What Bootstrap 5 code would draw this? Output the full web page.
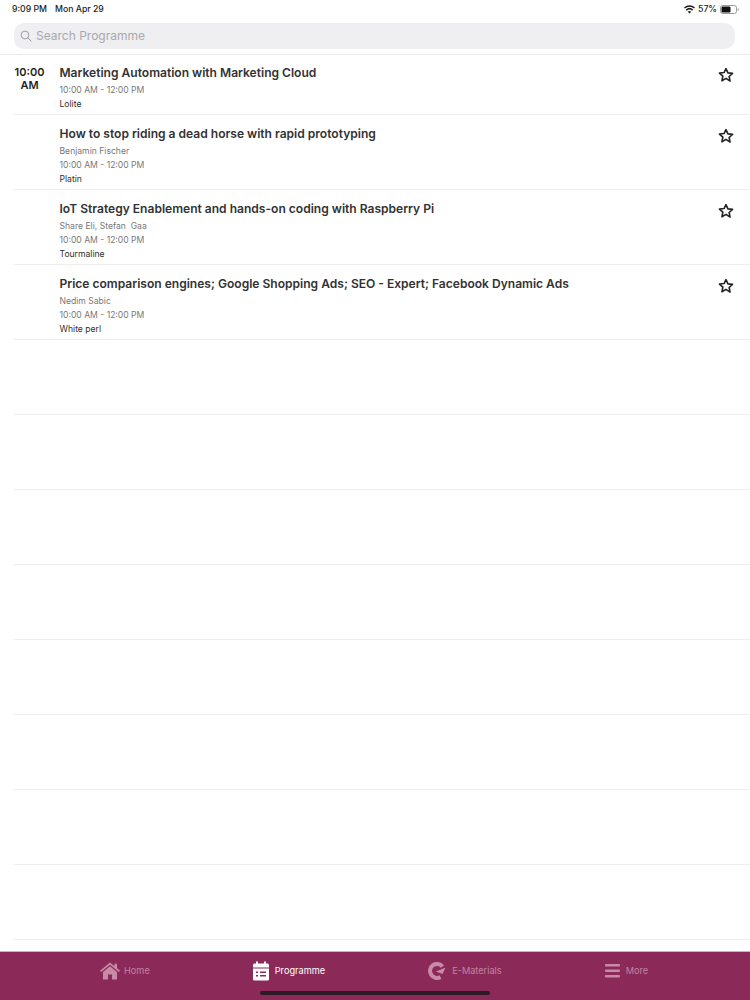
<!DOCTYPE html>
<html lang="en">
<head>
    <meta charset="UTF-8">
    <meta name="viewport" content="width=device-width, initial-scale=1.0">
    <title>Programme</title>
    <link href="https://cdn.jsdelivr.net/npm/bootstrap@5.3.0/dist/css/bootstrap.min.css" rel="stylesheet">
    <style>
        html, body { height: 100%; }
        body {
            font-family: Inter, "Noto Sans", sans-serif;
            background-color: #fff;
            color: #2b2b2d;
        }
        .app-shell { height: 1000px; overflow: hidden; }
        .status-bar {
            height: 23px;
            padding: 3px 11px 0 12px;
            font-size: 8.7px;
            font-weight: 500;
            color: #1c1c1e;
        }
        .status-icons { gap: 3px; }
        .search-wrap { padding: 0 15px 5px 14px; height: 32px; border-bottom: 1px solid #ebebec; }
        .search-box {
            height: 26px;
            background-color: #efeef1;
            border-radius: 10px;
            padding-left: 6px;
            gap: 4px;
            font-size: 12px;
            color: #a9a9ad;
        }
        .session-list { flex: 1 1 auto; overflow: hidden; }
        .session-row { height: 75px; margin-left: 13px; border-bottom: 1px solid #eeeeef; }
        .session-row.first-row { height: 60px; }
        .time-col {
            width: 33px;
            padding-top: 11px;
            font-size: 11px;
            line-height: 13px;
            font-weight: 600;
            text-align: center;
            color: #1f1f21;
        }
        .info-col { padding-left: 13.500px; padding-top: 11px; }
        .first-row .info-col { padding-top: 10px; }
        .session-title { font-size: 12.050px; line-height: 16px; font-weight: 600; color: #323234; margin-bottom: 2px; }
        .session-meta { font-size: 8.6px; line-height: 14px; color: #77777a; }
        .session-room { font-size: 8.6px; line-height: 14px; color: #2e2e30; }
        .star-col { width: 36px; padding-top: 13px; padding-left: 4px; }
        .first-row .star-col { padding-top: 12px; }
        .star-col svg { display: block; }
        .tab-bar {
            height: 49px;
            position: relative;
            padding-left: 100px;
            gap: 103px;
            background-color: #8b2a58;
            border-top: 1px solid #c9b3bd;
        }
        .tab-item { gap: 6px; font-size: 9.200px; color: #c283a3; padding-bottom: 10px; }
        .tab-item.tab-home { gap: 4px; }
        .tab-item.tab-active { color: #fff; }
        .home-bar {
            position: absolute;
            left: 260px;
            bottom: 5px;
            width: 230px;
            height: 4px;
            border-radius: 2px;
            background-color: #2c1a26;
        }
    </style>
</head>
<body>
    <div class="app-shell d-flex flex-column">
        <div class="status-bar d-flex justify-content-between align-items-start">
            <div class="d-flex gap-2"><span>9:09 PM</span><span>Mon Apr 29</span></div>
            <div class="status-icons d-flex align-items-center">
                <svg width="11" height="9" viewBox="0 0 11 9"><path d="M5.500 8.600 3.800 6.700a2.500 2.500 0 0 1 3.400 0zM2.900 5.700 1.800 4.500a5.600 5.600 0 0 1 7.400 0L8.100 5.700a4 4 0 0 0-5.200 0zM.9 3.500 0 2.400a8.300 8.300 0 0 1 11 0l-.9 1.100a7 7 0 0 0-9.200 0z" fill="#1c1c1e"/></svg>
                <span>57%</span>
                <svg width="19" height="9" viewBox="0 0 19 9"><rect x=".5" y=".5" width="16" height="8" rx="2.2" fill="none" stroke="#9a9a9c"/><rect x="1.500" y="1.500" width="9" height="6" rx="1.2" fill="#111"/><path d="M17.800 3v3c.7-.2 1-.8 1-1.500s-.3-1.300-1-1.500z" fill="#9a9a9c"/></svg>
            </div>
        </div>

        <div class="search-wrap flex-shrink-0">
            <div class="search-box d-flex align-items-center">
                <svg width="12" height="12" viewBox="0 0 12 12" fill="none" stroke="#a0a0a4" stroke-width="1"><circle cx="5" cy="5" r="3.900"/><path d="m8 8 3.300 3.300" stroke-linecap="round"/></svg>
                <span>Search Programme</span>
            </div>
        </div>

        <div class="session-list">
            <div class="session-row first-row d-flex">
                <div class="time-col">10:00 AM</div>
                <div class="info-col flex-grow-1">
                    <div class="session-title">Marketing Automation with Marketing Cloud</div>
                    <div class="session-meta">10:00 AM - 12:00 PM</div>
                    <div class="session-room">Lolite</div>
                </div>
                <div class="star-col"><svg width="16" height="16" viewBox="0 0 24 24" fill="none" stroke="#222" stroke-width="2.400" stroke-linejoin="round"><path d="m12 2.500 2.900 6.300 6.900.8-5.100 4.700 1.400 6.800L12 17.100l-6.100 3.500 1.400-6.800-5.100-4.700 6.900-.8z"/></svg></div>
            </div>
            <div class="session-row d-flex">
                <div class="time-col"></div>
                <div class="info-col flex-grow-1">
                    <div class="session-title">How to stop riding a dead horse with rapid prototyping</div>
                    <div class="session-meta">Benjamin Fischer</div>
                    <div class="session-meta">10:00 AM - 12:00 PM</div>
                    <div class="session-room">Platin</div>
                </div>
                <div class="star-col"><svg width="16" height="16" viewBox="0 0 24 24" fill="none" stroke="#222" stroke-width="2.400" stroke-linejoin="round"><path d="m12 2.500 2.900 6.300 6.900.8-5.100 4.700 1.400 6.800L12 17.100l-6.100 3.500 1.400-6.800-5.100-4.700 6.900-.8z"/></svg></div>
            </div>
            <div class="session-row d-flex">
                <div class="time-col"></div>
                <div class="info-col flex-grow-1">
                    <div class="session-title">IoT Strategy Enablement and hands-on coding with Raspberry Pi</div>
                    <div class="session-meta">Share Eli, Stefan&nbsp; Gaa</div>
                    <div class="session-meta">10:00 AM - 12:00 PM</div>
                    <div class="session-room">Tourmaline</div>
                </div>
                <div class="star-col"><svg width="16" height="16" viewBox="0 0 24 24" fill="none" stroke="#222" stroke-width="2.400" stroke-linejoin="round"><path d="m12 2.500 2.900 6.300 6.900.8-5.100 4.700 1.400 6.800L12 17.100l-6.100 3.500 1.400-6.800-5.100-4.700 6.900-.8z"/></svg></div>
            </div>
            <div class="session-row d-flex">
                <div class="time-col"></div>
                <div class="info-col flex-grow-1">
                    <div class="session-title">Price comparison engines; Google Shopping Ads; SEO - Expert; Facebook Dynamic Ads</div>
                    <div class="session-meta">Nedim Sabic</div>
                    <div class="session-meta">10:00 AM - 12:00 PM</div>
                    <div class="session-room">White perl</div>
                </div>
                <div class="star-col"><svg width="16" height="16" viewBox="0 0 24 24" fill="none" stroke="#222" stroke-width="2.400" stroke-linejoin="round"><path d="m12 2.500 2.900 6.300 6.900.8-5.100 4.700 1.400 6.800L12 17.100l-6.100 3.500 1.400-6.800-5.100-4.700 6.900-.8z"/></svg></div>
            </div>
            <div class="session-row"></div>
            <div class="session-row"></div>
            <div class="session-row"></div>
            <div class="session-row"></div>
            <div class="session-row"></div>
            <div class="session-row"></div>
            <div class="session-row"></div>
            <div class="session-row"></div>
        </div>

        <div class="tab-bar flex-shrink-0 d-flex">
            <div class="tab-item tab-home d-flex align-items-center">
                <svg width="20" height="18" viewBox="0 0 20 17" fill="#c98aa8"><path d="M10 0 0 8.300l1.100 1.300L10 2.300l8.900 7.300L20 8.300l-3-2.500V1.200h-2.500v2.500z"/><path d="M10 3.800 3 9.600V17h5v-5h4v5h5V9.600z"/></svg>
                <span>Home</span>
            </div>
            <div class="tab-item tab-active d-flex align-items-center">
                <svg width="16" height="20" viewBox="0 0 16 19" fill="#fff"><path d="M3 0h2v2h6V0h2v2h1.500A1.500 1.500 0 0 1 16 3.500V6H0V3.500A1.500 1.500 0 0 1 1.500 2H3z"/><path fill-rule="evenodd" d="M0 7h16v10.500a1.500 1.500 0 0 1-1.500 1.500h-13A1.500 1.500 0 0 1 0 17.500zM3 10v1.500h2V10zm4 0v1.500h6V10zm-4 3.500V15h2v-1.500zm4 0V15h6v-1.500z"/></svg>
                <span>Programme</span>
            </div>
            <div class="tab-item d-flex align-items-center">
                <svg width="18" height="18" viewBox="0 0 18 18" fill="none" stroke="#c98aa8" stroke-width="4"><path d="M14.500 4.500A7 7 0 1 0 12.500 15"/><path d="M8 9.500 17.500 5.500 14.500 12z" fill="#c98aa8" stroke="none"/></svg>
                <span>E-Materials</span>
            </div>
            <div class="tab-item d-flex align-items-center">
                <svg width="15" height="14" viewBox="0 0 15 14" fill="#c98aa8"><rect width="15" height="2.500" rx="1"/><rect y="5.500" width="15" height="2.500" rx="1"/><rect y="11" width="15" height="2.500" rx="1"/></svg>
                <span>More</span>
            </div>
            <div class="home-bar"></div>
        </div>
    </div>
    <script src="https://cdn.jsdelivr.net/npm/bootstrap@5.3.0/dist/js/bootstrap.bundle.min.js"></script>
</body>
</html>
